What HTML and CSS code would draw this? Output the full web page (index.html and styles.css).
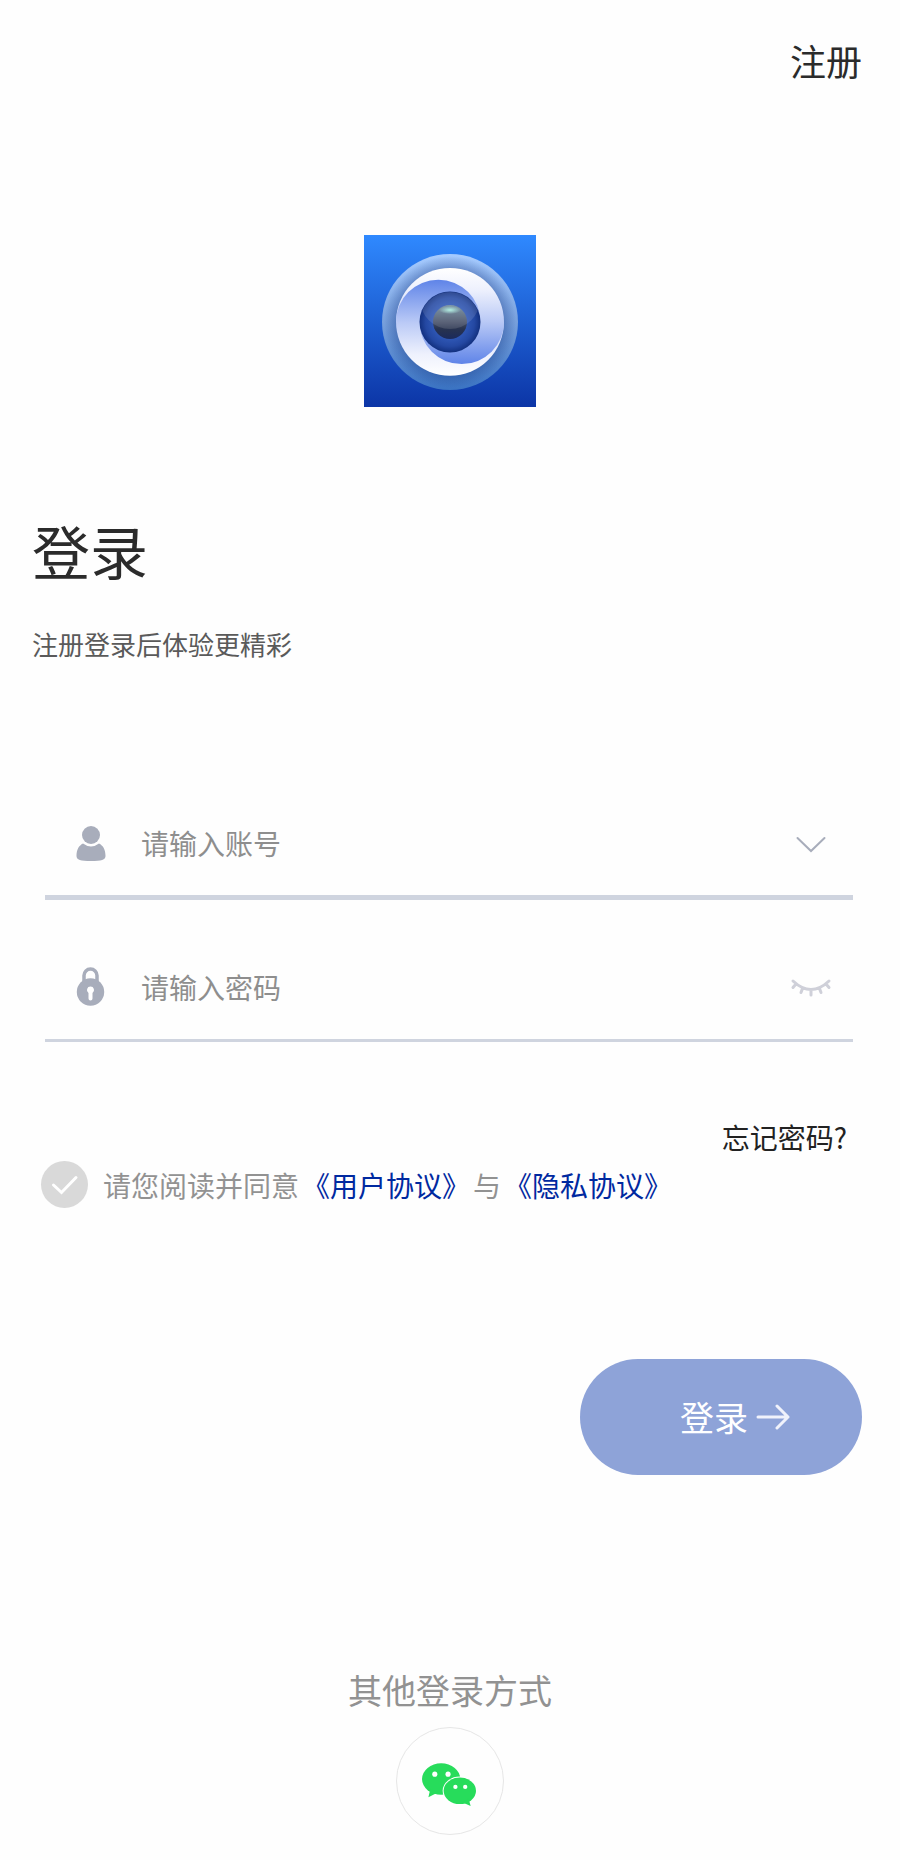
FILE: index.html
```html
<!DOCTYPE html>
<html lang="zh-CN">
<head>
  <meta charset="UTF-8">
  <meta name="viewport" content="width=device-width, initial-scale=1">
  <title>登录</title>
  <link rel="stylesheet" href="styles.css">
</head>
<body>
  <header class="topbar">
    <a href="#" class="register">注册</a>
  </header>

  <main>
    <svg class="logo" viewBox="0 0 172 172" role="img" aria-label="logo">
      <defs>
        <linearGradient id="bg" x1="0" y1="0" x2="0" y2="1">
          <stop offset="0" stop-color="#2f89ff"/>
          <stop offset="1" stop-color="#0c35a6"/>
        </linearGradient>
        <linearGradient id="ring" x1="0" y1="0" x2="0" y2="1">
          <stop offset="0" stop-color="#a6cbff"/>
          <stop offset="0.5" stop-color="#78a0dc"/>
          <stop offset="1" stop-color="#3a73c2"/>
        </linearGradient>
        <radialGradient id="shade">
          <stop offset="0.8" stop-color="#1a3f8c" stop-opacity="0.4"/>
          <stop offset="1" stop-color="#1a3f8c" stop-opacity="0"/>
        </radialGradient>
        <linearGradient id="whiteTop" x1="0" y1="0" x2="0" y2="1">
          <stop offset="0" stop-color="#ffffff"/>
          <stop offset="0.4" stop-color="#eef1fd"/>
          <stop offset="1" stop-color="#b9c9f6"/>
        </linearGradient>
        <linearGradient id="whiteBottom" x1="0" y1="1" x2="0" y2="0">
          <stop offset="0" stop-color="#ffffff"/>
          <stop offset="0.4" stop-color="#eef1fd"/>
          <stop offset="1" stop-color="#b9c9f6"/>
        </linearGradient>
        <linearGradient id="blueTop" x1="0" y1="0" x2="0" y2="1">
          <stop offset="0" stop-color="#5f84e8"/>
          <stop offset="1" stop-color="#b9c9f6"/>
        </linearGradient>
        <linearGradient id="blueBottom" x1="0" y1="1" x2="0" y2="0">
          <stop offset="0" stop-color="#5f84e8"/>
          <stop offset="1" stop-color="#b9c9f6"/>
        </linearGradient>
        <radialGradient id="iris">
          <stop offset="0.5" stop-color="#3059b8"/>
          <stop offset="0.8" stop-color="#2448a2"/>
          <stop offset="1" stop-color="#12307f"/>
        </radialGradient>
        <linearGradient id="pupil" x1="0" y1="0" x2="0" y2="1">
          <stop offset="0" stop-color="#6d8a9c"/>
          <stop offset="0.5" stop-color="#454e66"/>
          <stop offset="0.7" stop-color="#28334f"/>
          <stop offset="1" stop-color="#1b2a5c"/>
        </linearGradient>
        <radialGradient id="glint">
          <stop offset="0" stop-color="#b4f0e4"/>
          <stop offset="1" stop-color="#b4f0e4" stop-opacity="0"/>
        </radialGradient>
        <clipPath id="irisClip"><circle cx="86" cy="87" r="30"/></clipPath>
      </defs>
      <rect width="172" height="172" fill="url(#bg)"/>
      <circle cx="86" cy="87" r="68" fill="url(#ring)"/>
      <circle cx="86" cy="87" r="66" fill="url(#shade)"/>
      <path d="M32 87a54 54 0 0 1 108 0z" fill="url(#whiteTop)"/>
      <path d="M32 86.8a54 54 0 0 0 108 0z" fill="url(#whiteBottom)"/>
      <path d="M32 87a42.3 42.3 0 0 1 84.6 0z" fill="url(#blueTop)"/>
      <path d="M55.4 86.8a42.3 42.3 0 0 0 84.6 0z" fill="url(#blueBottom)"/>
      <circle cx="86" cy="87" r="30.5" fill="url(#iris)"/>
      <circle cx="86" cy="87" r="17" fill="url(#pupil)"/>
      <circle cx="86" cy="64" r="30" fill="#ffffff" opacity="0.12" clip-path="url(#irisClip)"/>
      <ellipse cx="86" cy="75" rx="11" ry="4" fill="url(#glint)"/>
    </svg>

    <h1 class="title">登录</h1>
    <p class="subtitle">注册登录后体验更精彩</p>

    <form class="login-form">
      <!-- 账号 -->
      <div class="field field-account">
        <label for="account" aria-label="账号">
          <svg class="field-icon" viewBox="0 0 30 40" fill="#a8adbb">
            <circle cx="15" cy="12" r="9"/>
            <path d="M7 20.500q8 6 16 0c4 2 6.500 6 6.500 12.500 0 4-4 5-14.500 5s-14.500-1-14.500-5c0-6.500 2.500-10.500 6.500-12.500z"/>
          </svg>
        </label>
        <input type="text" id="account" placeholder="请输入账号">
        <button type="button" class="icon-btn" aria-label="选择账号">
          <svg viewBox="0 0 42 30" fill="none" stroke="#a8adbb" stroke-width="2" stroke-linecap="round">
            <path d="M7.500 10 21 23 34.500 10"/>
          </svg>
        </button>
      </div>

      <!-- 密码 -->
      <div class="field">
        <label for="password" aria-label="密码">
          <svg class="field-icon" viewBox="0 0 30 40">
            <path d="M8 15V8.500a6.500 6.500 0 0 1 13 0V15" fill="none" stroke="#a8adbb" stroke-width="3.500"/>
            <circle cx="14.500" cy="25" r="13.700" fill="#a8adbb"/>
            <path d="M14.500 19.500a3.500 3.500 0 0 1 2 6.400v5.600a2 2 0 0 1-4 0v-5.600a3.500 3.500 0 0 1 2-6.400z" fill="#ffffff"/>
          </svg>
        </label>
        <input type="password" id="password" placeholder="请输入密码">
        <button type="button" class="icon-btn" aria-label="显示密码">
          <svg viewBox="0 0 42 30" fill="none" stroke="#cfd0d9" stroke-width="3" stroke-linecap="round">
            <path d="M3 9q18 17 36 0M6 12l-3 3.500M12.500 16.500l-1.500 4M21 18.500v4.500M29.500 16.500l1.500 4M36 12l3 3.500"/>
          </svg>
        </button>
      </div>

      <div class="forgot">
        <a href="#">忘记密码?</a>
      </div>

      <div class="agreement">
        <span class="check">
          <input type="checkbox" id="agree">
          <svg viewBox="0 0 47 47" fill="none" stroke="#ffffff" stroke-width="3" stroke-linecap="round">
            <path d="M12.500 24 20.500 31.500 35 16.500"/>
          </svg>
        </span>
        <label for="agree">请您阅读并同意</label>
        <a href="#">《用户协议》</a>
        <span>与</span>
        <a href="#">《隐私协议》</a>
      </div>

      <button type="submit" class="submit">
        登录
        <svg viewBox="0 0 34 28" fill="none" stroke="#f0f2fb" stroke-width="3" stroke-linecap="round" stroke-linejoin="round">
          <path d="M2 14h30M21 3l11 11-11 11"/>
        </svg>
      </button>
    </form>
  </main>

  <footer class="other">
    <p>其他登录方式</p>
    <button type="button" class="wechat" aria-label="微信登录">
      <svg viewBox="0 0 108 108">
        <g fill="#27dc5b">
          <ellipse cx="45" cy="52" rx="19.500" ry="16"/>
          <path d="M34 62 32 70.500 41 66z"/>
        </g>
        <ellipse cx="64" cy="64" rx="17.500" ry="14.500" fill="#ffffff"/>
        <g fill="#27dc5b">
          <ellipse cx="64" cy="64" rx="16.500" ry="13.500"/>
          <path d="M67 76l8 3.500-2-8z"/>
        </g>
        <g fill="#ffffff">
          <circle cx="38.500" cy="47" r="2.600"/>
          <circle cx="52" cy="47" r="2.600"/>
          <circle cx="59.500" cy="60" r="2.200"/>
          <circle cx="69.500" cy="60" r="2.200"/>
        </g>
      </svg>
    </button>
  </footer>
</body>
</html>
```
FILE: styles.css
```css
/* Reset */
* {
  margin: 0;
  padding: 0;
  box-sizing: border-box;
}
body {
  font-family: "Noto Sans CJK SC", sans-serif;
  background-color: #fefefe;
  color: #2b2b2b;
  padding: 33px 32px 24px;
}
a {
  color: inherit;
  text-decoration: none;
}
button {
  font-family: inherit;
  background: none;
  border: none;
  cursor: pointer;
}
svg {
  display: block;
}

.topbar {
  display: flex;
  justify-content: flex-end;
  margin-right: 6px;
}
.register {
  font-size: 36px;
  line-height: 54px;
}

.logo {
  width: 172px;
  height: 172px;
  margin: 148px auto 0;
}
.title {
  margin-top: 101px;
  font-size: 58px;
  font-weight: 400;
  line-height: 84px;
}
.subtitle {
  margin-top: 32px;
  color: #5a5a5a;
  font-size: 26px;
  line-height: 40px;
}

/* 登录表单 */
.login-form {
  margin: 131px 6px 0 0;
}
.field {
  display: flex;
  align-items: center;
  height: 142px;
  margin: 0 9px 0 13px;
  padding: 35px 21px 0 31px;
  border-bottom: 3px solid #cfd4df;
}
.field-account {
  height: 105px;
  padding-top: 0;
  padding-bottom: 5px;
  border-bottom-width: 5px;
}
.field-icon {
  width: 30px;
  height: 40px;
}
.field input {
  flex: 1;
  min-width: 0;
  margin-left: 35px;
  border: none;
  outline: none;
  background: none;
  font-family: inherit;
  font-size: 28px;
  line-height: 40px;
}
.field input::placeholder {
  color: #8e8e8e;
  opacity: 1;
}
.icon-btn svg {
  width: 42px;
  height: 30px;
}

.forgot {
  margin: 75px 15px 0 0;
  text-align: right;
  color: #222;
  font-size: 28px;
  line-height: 40px;
}
.agreement {
  display: flex;
  align-items: center;
  gap: 3px;
  margin: 4px 0 0 9px;
  color: #929292;
  font-size: 28px;
  line-height: 40px;
}
.agreement a {
  color: #0029a0;
}
.check {
  display: grid;
  width: 47px;
  height: 47px;
  margin-right: 12px;
}
.check input,
.check svg {
  grid-area: 1 / 1;
  width: 47px;
  height: 47px;
}
.check input {
  appearance: none;
  border-radius: 50%;
  background-color: #d9d9d9;
}
.check input:checked {
  background-color: #0029a0;
}
.check svg {
  pointer-events: none;
}

.submit {
  display: flex;
  align-items: center;
  gap: 8px;
  height: 116px;
  margin: 151px 0 0 auto;
  padding: 0 72px 0 100px;
  border-radius: 58px;
  background-color: #8ea3d8;
  color: #fff;
  font-size: 34px;
  line-height: 50px;
}
.submit svg {
  width: 34px;
  height: 28px;
}

.other {
  display: flex;
  flex-direction: column;
  align-items: center;
  margin-top: 190px;
  color: #929292;
  font-size: 34px;
  line-height: 50px;
}
.wechat {
  width: 108px;
  height: 108px;
  margin-top: 12px;
  border: 1px solid #e6e6e6;
  border-radius: 50%;
}
```
